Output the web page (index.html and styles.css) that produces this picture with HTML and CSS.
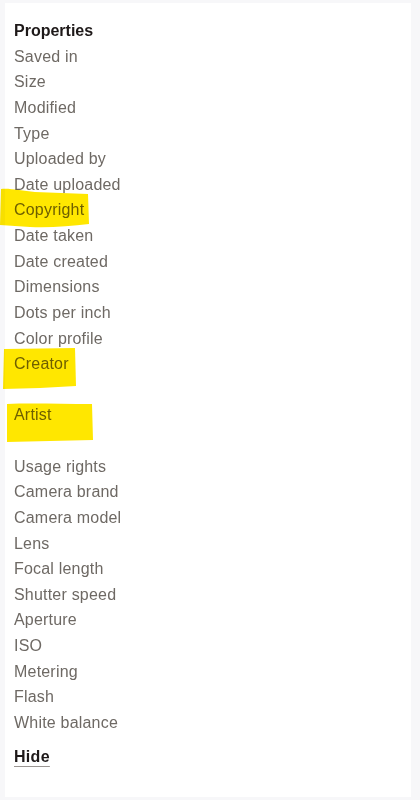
FILE: index.html
```html
<!DOCTYPE html>
<html>
<head>
<meta charset="utf-8">
<link rel="stylesheet" href="styles.css">
</head>
<body>
<div class="panel">
  <div class="list">
    <div class="row title">Properties</div>
    <div class="row">Saved in</div>
    <div class="row">Size</div>
    <div class="row">Modified</div>
    <div class="row">Type</div>
    <div class="row">Uploaded by</div>
    <div class="row">Date uploaded</div>
    <div class="row">Copyright</div>
    <div class="row">Date taken</div>
    <div class="row">Date created</div>
    <div class="row">Dimensions</div>
    <div class="row">Dots per inch</div>
    <div class="row">Color profile</div>
    <div class="row">Creator</div>
    <div class="row blank"></div>
    <div class="row">Artist</div>
    <div class="row blank"></div>
    <div class="row">Usage rights</div>
    <div class="row">Camera brand</div>
    <div class="row">Camera model</div>
    <div class="row">Lens</div>
    <div class="row">Focal length</div>
    <div class="row">Shutter speed</div>
    <div class="row">Aperture</div>
    <div class="row">ISO</div>
    <div class="row">Metering</div>
    <div class="row">Flash</div>
    <div class="row">White balance</div>
  </div>
  <a class="hide" href="#">Hide</a>
</div>
<svg class="marks" width="420" height="800" viewBox="0 0 420 800">
  <path d="M1,189 C10,188 22,191 35,192 L88,194 L89,224 C70,226 50,228 30,227 L0,225 Z"/>
  <path d="M4,349 L75,348 L76,386 L40,388 L3,389 Z"/>
  <path d="M7,404 C30,403 60,404 92,404 L93,440 L50,441 L7,442 Z"/>
</svg>
</body>
</html>
```

FILE: styles.css
```css
html, body {
  margin: 0;
  padding: 0;
}
body {
  background: #f7f7f9;
  font-family: "Liberation Sans", Arial, sans-serif;
  font-size: 16px;
  width: 420px;
  height: 800px;
  overflow: hidden;
}
.panel {
  margin: 3px 9px 0 5px;
  height: 794px;
  background: #ffffff;
  box-sizing: border-box;
  padding: 15px 0 0 9px;
}
.list {
  display: flex;
  flex-direction: column;
}
.row {
  line-height: 25.63px;
  height: 25.63px;
  color: #6e6964;
  letter-spacing: 0.2px;
  white-space: nowrap;
}
.row.title {
  color: #1e1919;
  font-weight: bold;
  letter-spacing: 0;
}
.hide {
  display: inline-block;
  margin-top: 8px;
  line-height: 25.63px;
  color: #1e1919;
  font-weight: bold;
  letter-spacing: 0.3px;
  text-decoration: underline;
  text-decoration-color: #9a9592;
  text-underline-offset: 4px;
}
.marks {
  position: absolute;
  top: 0;
  left: 0;
  mix-blend-mode: multiply;
  pointer-events: none;
}
.marks path {
  fill: #ffe700;
}
```
